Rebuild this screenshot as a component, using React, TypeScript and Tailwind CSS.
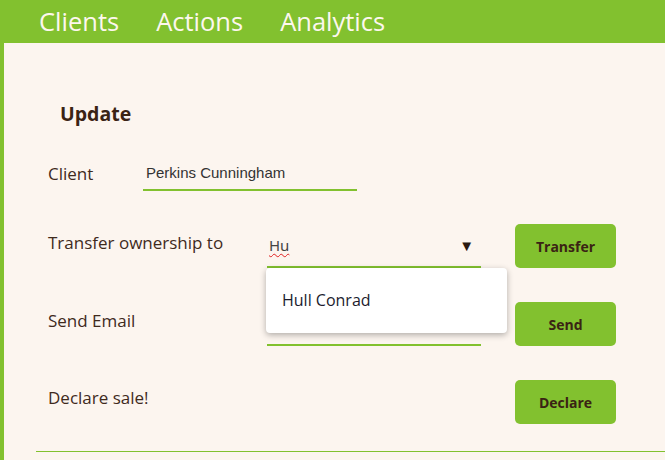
import React from "react";

const font = { fontFamily: '"Open Sans", "Noto Sans", sans-serif' };

function Btn({ label }: { label: string }) {
  return (
    <button className="w-[101px] h-[44px] rounded-[5px] bg-[#82c12f] text-[#3a2314] text-[14px] font-bold shrink-0">
      {label}
    </button>
  );
}

export default function App() {
  return (
    <div className="w-[665px] h-[460px] overflow-hidden bg-[#fcf5ef] flex flex-col" style={font}>
      <nav className="h-[43px] bg-[#82c12f] flex items-center pl-[39px] gap-[37px] shrink-0">
        <span className="text-[25.5px] text-[#fdf7ee] leading-none">Clients</span>
        <span className="text-[25.5px] text-[#fdf7ee] leading-none">Actions</span>
        <span className="text-[25.5px] text-[#fdf7ee] leading-none">Analytics</span>
      </nav>
      <div className="flex-1 border-l-[4px] border-[#82c12f] pl-[32px] pt-[58px] text-[#3f2a1d]">
        <h2 className="pl-[24px] text-[19.5px] font-bold leading-[26px] text-[#3a2314]">Update</h2>
        <div className="flex items-end pl-[12px] mt-[30px] h-[34px]">
          <span className="w-[95px] text-[17px] mb-[5px]">Client</span>
          <div className="w-[214px] h-[34px] border-b-2 border-[#82c12f] flex items-center pl-[3px]">
            <span className="text-[15px] text-[#333]" style={{ fontFamily: '"Liberation Sans", Arial, sans-serif' }}>
              Perkins Cunningham
            </span>
          </div>
        </div>
        <div className="flex items-center pl-[12px] mt-[33px] h-[44px]">
          <span className="w-[219px] text-[17px] mb-[6px]">Transfer ownership to</span>
          <div className="relative w-[214px] h-[43px] border-b-2 border-[#82c12f] flex items-center justify-between pl-[2px] pr-[7px]">
            <span
              className="text-[15px] text-[#444] underline decoration-wavy decoration-[#e02020] decoration-1 underline-offset-2"
              style={{ fontFamily: '"Noto Sans", sans-serif' }}
            >
              Hu
            </span>
            <span className="text-[15px] text-[#2a1a10]">▼</span>
            <div className="absolute left-[-1px] top-[43px] w-[241px] h-[65px] bg-white rounded-[4px] shadow-[0_2px_6px_rgba(0,0,0,0.3)] z-10 flex items-center pl-[16px]">
              <span className="text-[16px] text-[#1c1c2e] font-medium">Hull Conrad</span>
            </div>
          </div>
          <div className="ml-[34px]">
            <Btn label="Transfer" />
          </div>
        </div>
        <div className="flex items-center pl-[12px] mt-[34px] h-[44px]">
          <span className="w-[219px] text-[17px] mb-[6px]">Send Email</span>
          <div className="w-[214px] h-[43px] border-b-2 border-[#82c12f]" />
          <div className="ml-[34px]">
            <Btn label="Send" />
          </div>
        </div>
        <div className="flex items-center pl-[12px] mt-[34px] h-[44px]">
          <span className="w-[467px] text-[17px] mb-[8px]">Declare sale!</span>
          <Btn label="Declare" />
        </div>
        <div className="mt-[27px] h-px bg-[#82c12f]" />
      </div>
    </div>
  );
}
